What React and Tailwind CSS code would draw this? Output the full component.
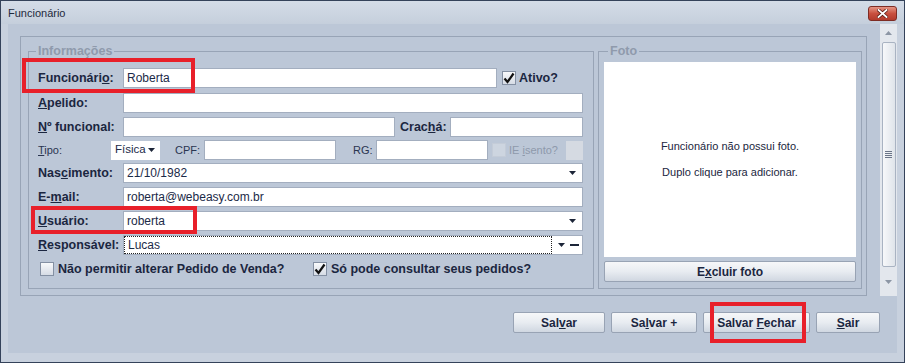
import React from 'react';

function Arrow() {
  return (
    <svg width="7" height="4" viewBox="0 0 7 4" className="shrink-0">
      <path d="M0 0 H7 L3.5 4 Z" fill="#1c2538" />
    </svg>
  );
}

function CheckBox({ checked, disabled }) {
  if (disabled) {
    return <span className="block h-[14px] w-[14px] shrink-0 border border-[#c4ccd8] bg-[#cdd5e0]" />;
  }
  return (
    <span className="flex h-[14px] w-[14px] shrink-0 items-center justify-center border border-[#8490a3] bg-gradient-to-b from-[#f8f9fb] to-[#d6dce5]">
      {checked && (
        <svg width="12" height="12" viewBox="0 0 12 12">
          <path d="M1.5 6.5 L4.5 10 L10.5 1.5" fill="none" stroke="#111" strokeWidth="2.2" />
        </svg>
      )}
    </span>
  );
}

function Label({ children, className = '' }) {
  return <span className={`shrink-0 text-[12.5px] font-bold text-[#1b2640] ${className}`}>{children}</span>;
}

function Input({ className = '', value, arrow }) {
  return (
    <div className={`flex h-[20px] items-center border border-[#a3aebf] bg-white pl-[3px] pr-[6px] text-[12px] text-[#1b2a48] ${className}`}>
      <span className="flex-1">{value}</span>
      {arrow && <Arrow />}
    </div>
  );
}

function Button({ children, className = '' }) {
  return (
    <button className={`flex h-[21px] items-center justify-center rounded-[2px] border border-[#98a3b4] bg-gradient-to-b from-[#f6f7f9] via-[#e8ecf1] to-[#d0d7e1] text-[12px] font-bold text-[#1b2640] ${className}`}>
      <span>{children}</span>
    </button>
  );
}

export default function App() {
  return (
    <div className="relative h-[363px] w-[905px] overflow-hidden border border-[#34425a] bg-[#c8d1de] font-['Liberation_Sans',Arial,sans-serif]">
      {/* title bar */}
      <div className="flex h-[23px] items-start justify-between bg-gradient-to-b from-[#d4dce7] to-[#c5cfdc] pl-[7px] pr-[7px]">
        <span className="pt-[6px] text-[11px] leading-[12px] text-[#1e2a3c]">Funcionário</span>
        <div className="mt-[5px] flex h-[15px] w-[29px] items-center justify-center rounded-[3px] border border-[#7e2c24] bg-gradient-to-b from-[#e49484] via-[#c9503f] to-[#b23a2c]">
          <svg width="11" height="9" viewBox="0 0 11 9">
            <path d="M1.5 1 L9.5 8 M9.5 1 L1.5 8" stroke="#5a1c15" strokeWidth="3.4" strokeLinecap="square" />
            <path d="M1.5 1 L9.5 8 M9.5 1 L1.5 8" stroke="#ffffff" strokeWidth="1.8" strokeLinecap="square" />
          </svg>
        </div>
      </div>

      {/* body */}
      <div className="flex px-[7px]">
        <div className="flex h-[329px] w-[889px] flex-col bg-[#bcc7d7]">
          <div className="flex h-[272px]">
            <div className="pl-[12px] pt-[12px]">
              <div className="flex h-[260px] w-[847px] gap-[4px] border border-[#98a4b6] pb-[6px] pl-[7px] pr-[4px] pt-[6px]">
                {/* Informações */}
                <fieldset className="h-[246px] w-[565px] border border-[#98a4b6]">
                  <legend className="ml-[7px] px-[2px] text-[12.5px] font-bold leading-[16px] text-[#8f9aac]">Informações</legend>
                  <div className="flex flex-col pl-[9px] pr-[10px] pt-[9px]">
                    <div className="flex h-[20px] items-center">
                      <Label className="w-[85px]">Funcionári<u>o</u>:</Label>
                      <Input className="w-[374px]" value="Roberta" />
                      <span className="ml-[5px]"><CheckBox checked /></span>
                      <Label className="ml-[3px]">Ativo?</Label>
                    </div>
                    <div className="mt-[5px] flex h-[20px] items-center">
                      <Label className="w-[85px]"><u>A</u>pelido:</Label>
                      <Input className="flex-1" />
                    </div>
                    <div className="mt-[4px] flex h-[20px] items-center">
                      <Label className="w-[85px]"><u>N</u>º funcional:</Label>
                      <Input className="w-[272px]" />
                      <Label className="ml-[5px] w-[50px]">Crac<u>h</u>á:</Label>
                      <Input className="flex-1" />
                    </div>
                    <div className="mt-[3px] flex h-[20px] items-center text-[11px] text-[#2a3550]">
                      <span className="w-[73px]"><u>T</u>ipo:</span>
                      <div className="flex h-[19px] w-[49px] items-center justify-between bg-white pl-[4px] pr-[5px] text-[11.5px] text-[#1b2a48]">
                        <span>Física</span>
                        <Arrow />
                      </div>
                      <span className="ml-[15px] w-[29px]">CPF:</span>
                      <Input className="w-[132px]" />
                      <span className="ml-[17px] w-[23px]">RG:</span>
                      <Input className="w-[112px]" />
                      <span className="ml-[4px]"><CheckBox disabled /></span>
                      <span className="ml-[3px] text-[#8e99ab]">IE <u>i</u>sento?</span>
                      <span className="ml-auto h-[19px] w-[17px] bg-[#d5dae2]" />
                    </div>
                    <div className="mt-[3px] flex h-[20px] items-center">
                      <Label className="w-[85px]">Nas<u>c</u>imento:</Label>
                      <Input className="flex-1" value="21/10/1982" arrow />
                    </div>
                    <div className="mt-[4px] flex h-[20px] items-center">
                      <Label className="w-[85px]">E-<u>m</u>ail:</Label>
                      <Input className="flex-1" value="roberta@webeasy.com.br" />
                    </div>
                    <div className="mt-[4px] flex h-[20px] items-center">
                      <Label className="w-[85px]"><u>U</u>suário:</Label>
                      <Input className="flex-1" value="roberta" arrow />
                    </div>
                    <div className="mt-[4px] flex h-[20px] items-center">
                      <Label className="w-[85px]"><u>R</u>esponsável:</Label>
                      <div className="flex h-[20px] flex-1 items-center border border-[#a3aebf] bg-white pr-[3px]">
                        <span className="flex h-full w-[428px] items-center border border-dotted border-[#222] pl-[3px] text-[12px] text-[#1b2a48]">Lucas</span>
                        <span className="ml-[6px]"><Arrow /></span>
                        <span className="ml-[5px] h-[2px] w-[9px] bg-[#1c2538]" />
                      </div>
                    </div>
                    <div className="mt-[5px] flex h-[18px] items-center">
                      <div className="flex w-[275px] items-center pl-[2px]">
                        <CheckBox />
                        <Label className="ml-[4px]">Não permitir alterar Pedido de Venda?</Label>
                      </div>
                      <CheckBox checked />
                      <Label className="ml-[4px]">Só pode consultar seus pedidos?</Label>
                    </div>
                  </div>
                </fieldset>

                {/* Foto */}
                <fieldset className="h-[246px] w-[265px] border border-[#98a4b6]">
                  <legend className="ml-[9px] px-[2px] text-[12.5px] font-bold leading-[16px] text-[#8f9aac]">Foto</legend>
                  <div className="flex flex-col px-[5px] pt-[3px]">
                    <div className="flex h-[195px] flex-col items-center justify-center gap-[13px] bg-white text-[11px] leading-[13px] text-[#1b2640]">
                      <p>Funcionário não possui foto.</p>
                      <p>Duplo clique para adicionar.</p>
                    </div>
                    <Button className="mt-[4px] w-full text-[12.5px]">E<u>x</u>cluir foto</Button>
                  </div>
                </fieldset>
              </div>
            </div>

            {/* scrollbar */}
            <div className="ml-[13px] flex h-[272px] w-[17px] flex-col items-center bg-[#e3e7ed]">
              <div className="flex h-[18px] items-center justify-center">
                <svg width="7" height="4" viewBox="0 0 7 4"><path d="M0 4 H7 L3.5 0 Z" fill="#8c96a5" /></svg>
              </div>
              <div className="flex h-[225px] w-[14px] items-center justify-center rounded-[2px] border border-[#a9b3c2] bg-gradient-to-r from-[#f7f8fa] to-[#dfe4ea]">
                <div className="flex w-[7px] flex-col gap-[1px]">
                  <span className="h-[1px] bg-[#6b7588]" />
                  <span className="h-[1px] bg-[#6b7588]" />
                  <span className="h-[1px] bg-[#6b7588]" />
                  <span className="h-[1px] bg-[#6b7588]" />
                </div>
              </div>
              <div className="flex flex-1 items-center justify-center">
                <svg width="7" height="4" viewBox="0 0 7 4"><path d="M0 0 H7 L3.5 4 Z" fill="#8c96a5" /></svg>
              </div>
            </div>
          </div>

          {/* buttons */}
          <div className="flex justify-end gap-[6px] pr-[17px] pt-[16px]">
            <Button className="w-[92px]">Sal<u>v</u>ar</Button>
            <Button className="w-[86px]">Sa<u>l</u>var +</Button>
            <Button className="w-[107px]">Salvar <u>F</u>echar</Button>
            <Button className="w-[64px]"><u>S</u>air</Button>
          </div>
        </div>
      </div>

      {/* annotation boxes */}
      <div className="absolute left-[21px] top-[57px] h-[35px] w-[173px] border-4 border-[#e8202a]" />
      <div className="absolute left-[30px] top-[205px] h-[28px] w-[166px] border-4 border-[#e8202a]" />
      <div className="absolute left-[709px] top-[301px] h-[41px] w-[96px] border-4 border-[#e8202a]" />
    </div>
  );
}
